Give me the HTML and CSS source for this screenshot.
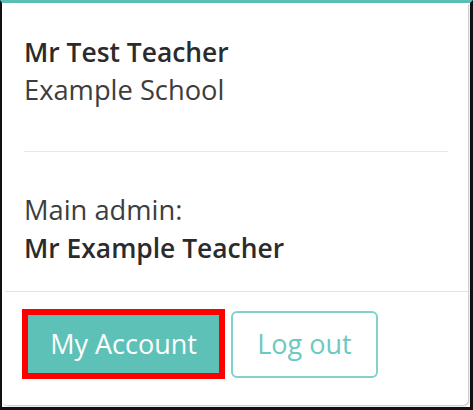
FILE: index.html
```html
<!DOCTYPE html>
<html lang="en">
<head>
    <meta charset="UTF-8">
    <meta name="viewport" content="width=device-width, initial-scale=1.0">
    <title>Account Menu</title>

    <link rel="stylesheet" href="styles.css">
</head>
<body>

    <!-- Account dropdown panel -->
    <div class="frame">
        <div class="card">

            <!-- Signed in user -->
            <div class="user">
                <p class="name">Mr Test Teacher</p>
                <p>Example School</p>
            </div>

            <hr class="divider">

            <!-- School admin -->
            <div class="admin">
                <p>Main admin:</p>
                <p class="name">Mr Example Teacher</p>
            </div>

            <!-- Actions -->
            <div class="actions">
                <a href="#" class="btn btn-primary highlight">My Account</a>
                <a href="#" class="btn btn-outline">Log out</a>
            </div>

        </div>
    </div>

</body>
</html>
```

FILE: styles.css
```css
/* Global Reset */
* {
    margin: 0;
    padding: 0;
    box-sizing: border-box;
}

/* Body */
body {
    font-family: 'Open Sans', 'Liberation Sans', sans-serif;
    background-color: #fff;
    color: #333;
    width: 473px;
    height: 410px;
}

/* Outer frame of the screenshot */
.frame {
    width: 473px;
    height: 410px;
    border-left: 2px solid #111;
    border-right: 3px solid #111;
    border-bottom: 3px solid #111;
    border-top: 3px solid #5cbfb6;
    background-color: #fff;
    padding: 0 2px 2px 0;
}

/* Card */
.card {
    height: 100%;
    background-color: #fff;
    border-radius: 0 0 5px 5px;
    box-shadow: 1px 1px 2px rgba(0, 0, 0, 0.25);
    display: flex;
    flex-direction: column;
}

.card p {
    font-size: 27.3px;
    line-height: 38px;
    color: #3d3d3d;
}

.card p.name {
    font-size: 26.4px;
    font-weight: 600;
    color: #2b2b2b;
}

.user {
    padding: 30px 22px 0;
}

.divider {
    border: none;
    border-top: 1px solid #e8e8e8;
    margin: 42px 20px 0 22px;
}

.admin {
    padding: 39px 22px 24px;
    border-bottom: 1px solid #e2e2e2;
    margin-left: 3px;
    padding-left: 19px;
}

/* Buttons */
.actions {
    display: flex;
    align-items: center;
    gap: 6px;
    padding: 17px 20px 0;
}

.btn {
    display: flex;
    align-items: center;
    justify-content: center;
    font-size: 27px;
    text-decoration: none;
    border-radius: 6px;
}

.btn-primary {
    width: 203px;
    height: 70px;
    background-color: #5dc1b8;
    color: #fff;
    padding-bottom: 1px;
}

/* Red annotation box round the button */
.highlight {
    border: 6px solid #f00;
    border-radius: 0;
}

.btn-outline {
    width: 147px;
    height: 67px;
    border: 2px solid #7fd3cb;
    color: #6cc9c0;
    background-color: #fff;
    padding-bottom: 2px;
}
```
